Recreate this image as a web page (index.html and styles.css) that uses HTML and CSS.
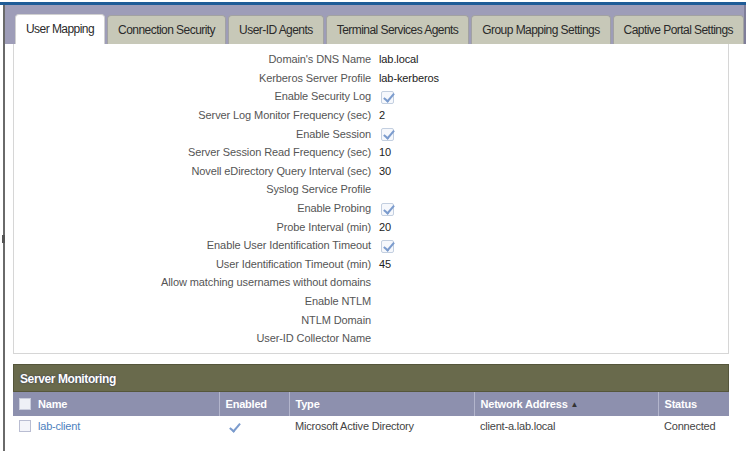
FILE: index.html
```html
<!DOCTYPE html>
<html lang="en">
<head>
  <meta charset="UTF-8" />
  <title>User Identification</title>
  <link rel="stylesheet" href="styles.css">
</head>
<body>
  <div class="topline"></div>
  <div class="main">
    <span class="splitter"></span>

    <!-- Tabs -->
    <div class="tabs">
      <div class="tab active">User Mapping</div>
      <div class="tab">Connection Security</div>
      <div class="tab">User-ID Agents</div>
      <div class="tab">Terminal Services Agents</div>
      <div class="tab">Group Mapping Settings</div>
      <div class="tab">Captive Portal Settings</div>
    </div>

    <div class="content">
      <!-- Settings -->
      <div class="form-box">
        <div class="lbl">Domain's DNS Name</div><div class="val">lab.local</div>
        <div class="lbl">Kerberos Server Profile</div><div class="val">lab-kerberos</div>
        <div class="lbl">Enable Security Log</div><div class="val"><span class="check"></span></div>
        <div class="lbl">Server Log Monitor Frequency (sec)</div><div class="val">2</div>
        <div class="lbl">Enable Session</div><div class="val"><span class="check"></span></div>
        <div class="lbl">Server Session Read Frequency (sec)</div><div class="val">10</div>
        <div class="lbl">Novell eDirectory Query Interval (sec)</div><div class="val">30</div>
        <div class="lbl">Syslog Service Profile</div><div class="val"></div>
        <div class="lbl">Enable Probing</div><div class="val"><span class="check"></span></div>
        <div class="lbl">Probe Interval (min)</div><div class="val">20</div>
        <div class="lbl">Enable User Identification Timeout</div><div class="val"><span class="check"></span></div>
        <div class="lbl">User Identification Timeout (min)</div><div class="val">45</div>
        <div class="lbl">Allow matching usernames without domains</div><div class="val"></div>
        <div class="lbl">Enable NTLM</div><div class="val"></div>
        <div class="lbl">NTLM Domain</div><div class="val"></div>
        <div class="lbl">User-ID Collector Name</div><div class="val"></div>
      </div>

      <!-- Server Monitoring -->
      <div class="monitor">
        <div class="monitor-title">Server Monitoring</div>
        <table class="grid">
          <thead>
            <tr>
              <th class="c-name"><span class="box"></span>Name</th>
              <th class="c-enabled">Enabled</th>
              <th class="c-type">Type</th>
              <th class="c-addr">Network Address <span class="sort">&#9650;</span></th>
              <th class="c-status">Status</th>
            </tr>
          </thead>
          <tbody>
            <tr>
              <td><span class="box light"></span><a href="#" class="link">lab-client</a></td>
              <td><span class="check plain"></span></td>
              <td>Microsoft Active Directory</td>
              <td>client-a.lab.local</td>
              <td class="ok">Connected</td>
            </tr>
          </tbody>
        </table>
      </div>
    </div>
  </div>
</body>
</html>
```

FILE: styles.css
```css
* {
  margin: 0;
  padding: 0;
  box-sizing: border-box;
}
body {
  font-family: 'Liberation Sans', Arial, sans-serif;
  background: #fff;
  color: #333;
  padding-top: 2px;
  width: 749px;
  height: 454px;
  overflow: hidden;
}

.topline {
  width: 746px;
  height: 3px;
  background: #1f5c97;
}

.main {
  position: relative;
  margin-left: 3px;
  width: 743px;
  height: 446px;
  border-left: 2px solid #6a6a6a;
}
.splitter {
  position: absolute;
  left: -3px;
  top: 230px;
  width: 3px;
  height: 8px;
  background: #555;
}

/* --- Tabs --- */
.tabs {
  display: flex;
  align-items: flex-end;
  gap: 2px;
  height: 39px;
  padding-left: 10px;
  background: #9e9db8;
  border-right: 2px solid #7f7e99;
}
.tab {
  height: 29px;
  line-height: 28px;
  padding: 0 10px;
  font-size: 12px;
  letter-spacing: -0.55px;
  color: #2a2a2a;
  background: #c7c8b8;
  border: 1px solid #a2a2a2;
  border-bottom: none;
  border-radius: 4px 4px 0 0;
  white-space: nowrap;
}
.tab.active {
  height: 30px;
  background: #fff;
  border-color: #d0d0d0;
}

/* --- Form --- */
.content {
  padding: 0 17px 0 8px;
}
.form-box {
  display: grid;
  grid-template-columns: 357px 1fr;
  grid-auto-rows: 18.6px;
  column-gap: 8px;
  align-items: center;
  padding: 6px 0 5px;
  border: 1px solid #d6d6d6;
  border-top: none;
  font-size: 11px;
  letter-spacing: -0.1px;
  color: #555;
}
.lbl {
  text-align: right;
  white-space: nowrap;
}
.val {
  color: #222;
}
.check {
  display: inline-block;
  position: relative;
  width: 13px;
  height: 13px;
  margin: 2px 0 0 2px;
  border: 1px solid #c3cfe0;
  border-radius: 2px;
  background: #f6f8fc;
  vertical-align: middle;
}
.check::after {
  content: '';
  position: absolute;
  left: 4px;
  top: -1px;
  width: 4px;
  height: 9px;
  border: solid #7b9bcd;
  border-width: 0 2px 2px 0;
  transform: rotate(40deg);
}
.check.plain {
  border-color: transparent;
  background: transparent;
}

/* --- Server Monitoring --- */
.monitor {
  margin-top: 10px;
}
.monitor-title {
  height: 28px;
  line-height: 28px;
  padding-left: 6px;
  background: #696a4c;
  border: 1px solid #55563b;
  color: #fff;
  font-size: 12px;
  font-weight: 700;
  letter-spacing: -0.4px;
  text-shadow: 0 0 2px #33345a;
}
.grid {
  width: 100%;
  border-collapse: collapse;
  font-size: 11px;
  letter-spacing: -0.2px;
}
.grid th {
  height: 24px;
  padding: 0 6px;
  text-align: left;
  background: #8d90ae;
  color: #fff;
  font-weight: 700;
  border-left: 1px solid #b3b5cc;
  white-space: nowrap;
}
.grid th:first-child {
  border-left: none;
}
.grid td {
  height: 21px;
  padding: 0 6px;
  color: #444;
  white-space: nowrap;
}
.c-name { width: 206px; }
.c-enabled { width: 70px; }
.c-type { width: 185px; }
.c-addr { width: 184px; }
.grid .box {
  display: inline-block;
  width: 12px;
  height: 12px;
  margin-right: 7px;
  vertical-align: -2px;
  background: #eef0f6;
  border: 1px solid #c9ccdc;
}
.grid .box.light {
  background: #f4f5fa;
  border-color: #b9bdd2;
}
.sort {
  font-size: 8px;
  color: #333;
  vertical-align: 1px;
}
.link {
  color: #4d7fbe;
  text-decoration: none;
}
.ok {
  color: #2f8a2f;
}
```
